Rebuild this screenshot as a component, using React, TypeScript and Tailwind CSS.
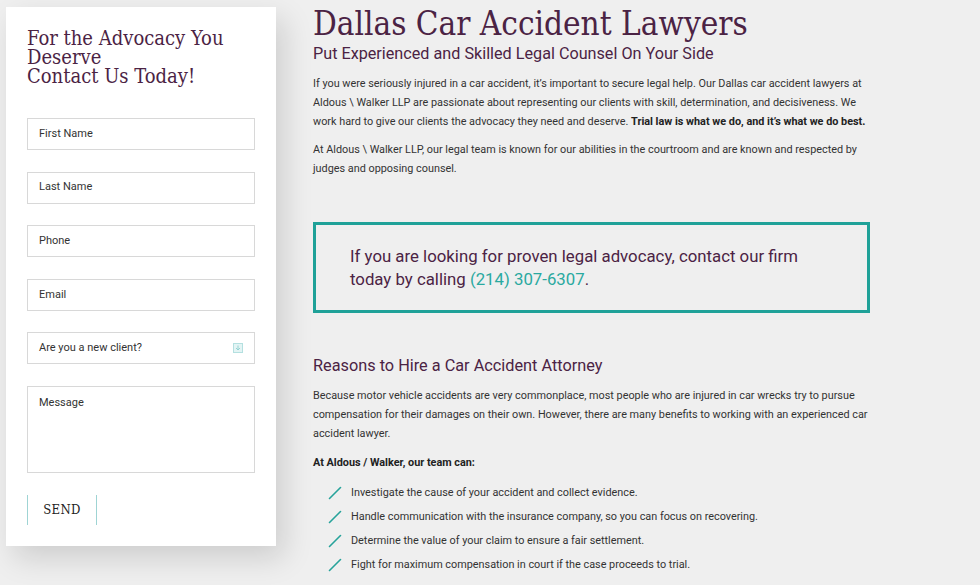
import type { ReactNode } from "react";

const slab = {
  fontFamily: '"DejaVu Serif", "Liberation Serif", serif',
  fontStretch: "condensed",
};
const sans = { fontFamily: 'Roboto, "Liberation Sans", sans-serif' };

const fields = ["First Name", "Last Name", "Phone", "Email"];

const reasons = [
  "Investigate the cause of your accident and collect evidence.",
  "Handle communication with the insurance company, so you can focus on recovering.",
  "Determine the value of your claim to ensure a fair settlement.",
  "Fight for maximum compensation in court if the case proceeds to trial.",
];

function Field({ children, tall }: { children: ReactNode; tall?: boolean }) {
  return (
    <div
      className={`flex border border-[#d8d8d8] bg-white px-[11px] text-[11px] text-[#333] ${
        tall ? "h-[87px] items-start pt-[8px]" : "h-[32px] items-center"
      }`}
    >
      {children}
    </div>
  );
}

function Slash() {
  return (
    <svg width="14" height="14" viewBox="0 0 14 14" className="shrink-0">
      <path d="M1.5 12.5 L12.5 1.5" stroke="#27a39b" strokeWidth="1.6" strokeLinecap="round" />
    </svg>
  );
}

export default function App() {
  return (
    <div className="flex h-[585px] w-[980px] overflow-hidden bg-[#efefef]" style={sans}>
      <aside className="ml-[6px] mt-[7px] flex h-[539px] w-[270px] shrink-0 flex-col bg-white px-[21px] pt-[22px] shadow-[8px_12px_28px_rgba(0,0,0,0.14)]">
        <h3 className="text-[20px] leading-[19px] text-[#4b2344]" style={slab}>
          <span className="block whitespace-nowrap">For the Advocacy You</span>
          <span className="block">Deserve</span>
          <span className="block whitespace-nowrap">Contact Us Today!</span>
        </h3>
        <form className="mt-[32px] flex flex-col gap-[21.6px]">
          {fields.map((f) => (
            <Field key={f}>{f}</Field>
          ))}
          <Field>
            <span className="flex-1">Are you a new client?</span>
            <svg width="10" height="10" viewBox="0 0 10 10">
              <rect x="0.5" y="0.5" width="9" height="9" fill="#e3f4f4" stroke="#b4e0e0" />
              <path d="M5 2.5 V7 M3 5 L5 7 L7 5" stroke="#8fcfcf" strokeWidth="0.9" fill="none" />
            </svg>
          </Field>
          <Field tall>Message</Field>
        </form>
        <button
          type="button"
          className="mt-[22px] h-[30px] w-[70px] border-x border-[#9fd4d4] text-[13px] tracking-wide text-[#222]"
          style={slab}
        >
          SEND
        </button>
      </aside>

      <main className="ml-[37px] w-[560px] shrink-0 text-[10.85px] leading-[19px] text-[#333]">
        <h1 className="mt-[4px] text-[33px] leading-[40px] text-[#4b2344]" style={slab}>
          Dallas Car Accident Lawyers
        </h1>
        <h2 className="-mt-[1px] text-[16.2px] leading-[22px] text-[#4b2344]">
          Put Experienced and Skilled Legal Counsel On Your Side
        </h2>
        <p className="mt-[9px]">
          If you were seriously injured in a car accident, it’s important to secure legal help. Our Dallas car accident
          lawyers at Aldous \ Walker LLP are passionate about representing our clients with skill, determination, and
          decisiveness. We work hard to give our clients the advocacy they need and deserve.{" "}
          <strong className="font-bold text-[#222]">Trial law is what we do, and it’s what we do best.</strong>
        </p>
        <p className="mt-[9px]">
          At Aldous \ Walker LLP, our legal team is known for our abilities in the courtroom and are known and respected by
          judges and opposing counsel.
        </p>

        <div className="mt-[44px] flex h-[91px] w-[557px] items-center border-[3px] border-[#1fa198] pl-[34px] pr-[60px]">
          <p className="text-[16.8px] leading-[23px] text-[#4b2344]">
            If you are looking for proven legal advocacy, contact our firm today by calling{" "}
            <span className="text-[#2aa9a0]">(214) 307-6307</span>.
          </p>
        </div>

        <h2 className="mt-[42px] text-[16.3px] leading-[22px] text-[#4b2344]">Reasons to Hire a Car Accident Attorney</h2>
        <p className="mt-[9px]">
          Because motor vehicle accidents are very commonplace, most people who are injured in car wrecks try to pursue
          compensation for their damages on their own. However, there are many benefits to working with an experienced
          car accident lawyer.
        </p>
        <p className="mt-[10px] font-bold text-[#222]">At Aldous / Walker, our team can:</p>
        <ul className="mt-[11px] flex flex-col gap-[5px] pl-[15px]">
          {reasons.map((r) => (
            <li key={r} className="flex items-center gap-[9px]">
              <Slash />
              <span>{r}</span>
            </li>
          ))}
        </ul>
      </main>
    </div>
  );
}
